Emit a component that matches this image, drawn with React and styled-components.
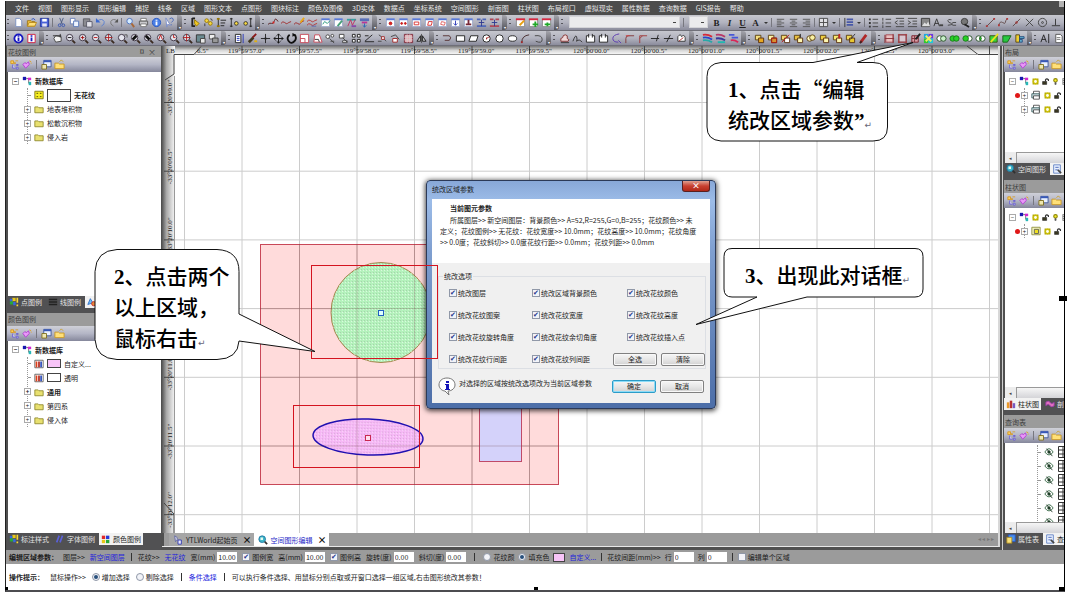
import React from "react";
import styled, { createGlobalStyle } from "styled-components";

const GlobalStyle = createGlobalStyle`
  * {
    box-sizing: border-box;
  }
  body {
    margin: 0;
    background: #fff;
    color: #1c1c1c;
    font-family: "Noto Sans CJK SC", "Noto Sans", sans-serif;
    font-size: 7px;
    line-height: 10px;
    overflow: hidden;
  }
  button, input, select {
    font: inherit;
    color: inherit;
    margin: 0;
  }
`;

/* ---------- icons ---------- */

const p = (d, stroke = "#333", fill = "none", w = 1) => ({ d, stroke, fill, w });

const ring = (x, y, r) =>
  `M${x - r} ${y}a${r} ${r} 0 1 0 ${2 * r} 0a${r} ${r} 0 1 0 ${-2 * r} 0z`;

const lens = (...extra) => [
  p(ring(5, 5, 3.5), "#3a3040", "#e6e6ee"),
  p("M8 8l3 3", "#3a2a20", "none", 2),
  ...extra,
];

const tableTop = (...extra) => [
  p("M1.5 2.5h9v8h-9z", "#9aa6c8", "#fff"),
  p("M1.5 2.5h9", "#5a7ad8", "none", 2),
  ...extra,
];

const redTop = (...extra) => [
  p("M1.5 2.5h9v8h-9z", "#888", "#fff"),
  p("M1 2.5h10", "#d82840", "none", 2),
  ...extra,
];

const overlap = (a, b, ...extra) => [
  p("M1.5 2.5h6v5h-6z", "#5a4010", a),
  p("M5 5.5h5.5v5H5z", "#5a3010", b),
  ...extra,
];

const GLYPHS = {
  newDoc: [p("M3 1.5h4l2.5 2.5v6.5H3z", "#7a8fc0", "#fff")],
  open: [p("M1.5 4h4l1 1h3v5h-8z", "#a07818", "#f0c040"), p("M1.5 10l2-4h8l-2 4z", "#b88a20", "#ffe078"), p("M6 2.5q3-2 4 1", "#2a50c0")],
  save: [p("M1.5 1.5h9v9h-9z", "#22339a", "#4a62d8"), p("M3.5 2h5v3h-5z", "none", "#fff"), p("M3.5 7h5v3.5h-5z", "none", "#e6e6f4")],
  cut: [p("M4 1l3 7M8 1L5 8", "#4a5a80"), p(ring(4, 9, 1.5), "#3a58b0"), p(ring(8, 9, 1.5), "#3a58b0")],
  copy: [p("M1.5 1.5h5v6h-5z", "#6a80b8", "#fff"), p("M5 4.5h5.5v6H5z", "#5a78b8", "#eef4ff")],
  paste: [p("M1.5 2h7v8h-7z", "#5a5a60", "#8a8a90"), p("M5 5h6v6H5z", "#5a5a68", "#e4e4ec")],
  undo: [p("M3 4q5-3 7 1q1 3-3 5", "#5a80d0", "none", 1), p("M1 1v5h5z", "none", "#3a68d0")],
  redo: [p("M10 4q-5-3-7 1q-1 3 3 5", "#777", "none", 1), p("M11 2v4H7z", "none", "#555")],
  find: [p(ring(5, 4.5, 3), "#4a70c0", "#d4ecff"), p("M7 7l3 4", "#a86838", "none", 2)],
  print: [p("M3 1.5h6v3H3z", "#777", "#fff"), p("M1.5 4.5h9v4h-9z", "#555", "#c8c8cc"), p("M3 7.5h6v3H3z", "#777", "#fff")],
  info: [p(ring(6, 6, 4.5), "#2858c0", "#4a80e8"), p("M6 5v4M6 3v1", "#fff", "none", 2)],
  help: [p("M2 1l5 8-3-1-1 3z", "#7a8cc8", "#fff"), p("M6 2q3-2 4 0t-2 4M8 8v1", "#4868b8", "none", 1)],
  snapA: [p("M2.5 1v9.500M2.500 1.500h3M2.500 10h3", "#222", "none", 2), p("M5 3l5 4-3 3-2-3z", "#987808", "#f0c820")],
  snapB: [p(ring(4, 4, 2), "#987808", "#f8d840"), p(ring(8, 7, 2), "#987808", "#f8d840"), p("M8 2q2 0 2 2M2 7v3", "#333")],
  snapC: [p("M2.5 1v10M5 3.500h6M5 6.500h5M5 9.500h4", "#222", "none", 1), p("M1 2h3M1 10h3", "#987808", "none", 2)],
  snapD: [p("M2.5 1v10M1 2h3M1 10h3", "#222"), p(ring(8, 7, 2), "#333", "#f8d840")],
  snapE: [p("M9.500 1v10M8 2h3M8 10h3", "#222"), p(ring(4, 7, 2), "#333", "#f8d840")],
  waveA: [p("M0 8q2-2 4-1t3-3 4 1", "#5a2020"), p("M5 5h2v2H5z", "none", "#e02020")],
  waveB: [p("M0 7q2-3 4-1t3 1 4-2", "#a02828", "none", 1)],
  waveC: [p("M0 8q2-3 4-1t3 0 4-3", "#a02828"), p("M7 6l4-5", "#e8a818", "none", 2)],
  waveD: [p("M0 5q2-3 4-1t3 1 4-2M0 9q2-3 4-1t3 1 4-2", "#b83838"), p("M5 10h5", "#5a68b0", "none", 1)],
  waveE: tableTop(p("M3 8l2-3 3 2 3-3", "#2a9880")),
  waveF: tableTop(p("M5 10l5-6", "#48a078", "none", 2)),
  waveG: [p("M1 3h10", "#38a0a0", "none", 2), p("M2 10l3-7 2 6 3-6", "#c03060"), p("M6 10h5", "#8848a8", "none", 2)],
  waveH: [p("M1 3h10", "#5870b8", "none", 3), p("M3 6h6", "#b83898", "none", 2), p("M6 7v4M4 9l2 2 2-2", "#2868b8")],
  ptA: tableTop(p(ring(6, 7, 1.5), "#c01818", "#e02020")),
  ptB: tableTop(p(ring(4, 7, 1), "#c01818", "#e02020"), p(ring(8, 7, 1), "#c01818", "#e02020")),
  ptC: tableTop(p("M3.500 5.500h5v3h-5z", "#d83030")),
  ptD: tableTop(p("M4 9l1-4h4l-1 4z", "#d83030")),
  ptE: tableTop(p("M4 8l1-3 4 1-1 3z", "#e06060")),
  ptF: tableTop(p("M6 4v5M4 7l2 2 2-2", "#2a38b8")),
  ptG: tableTop(p("M6 3v4M3 8h6", "#782838", "none", 2)),
  ptH: [p("M1 2.500h4M7 2.500h4M1 10h10", "#5068b8", "none", 2), p("M6 3v7M3 6h6", "#303a90")],
  ptI: [p("M1 2.500h4M7 2.500h4M1 10h10", "#b04858", "none", 2), p("M6 3v7M3 6h6", "#303a90")],
  calA: redTop(p("M5 9l5-5", "#e8a010", "none", 2)),
  calB: redTop(p("M5 8h6M8 5v6", "#20a828", "none", 2)),
  calC: redTop(p("M4 8h6M7 6v4", "#20a828", "none", 2)),
  alignL: [p("M2 2.500h8M2 4.500h5M2 6.500h8M2 8.500h5M2 10.500h8", "#555")],
  alignC: [p("M2 2.500h8M4 4.500h4M2 6.500h8M4 8.500h4M2 10.500h8", "#555")],
  alignR: [p("M2 2.500h8M5 4.500h5M2 6.500h8M5 8.500h5M2 10.500h8", "#555")],
  grid: [p("M1.500 1.500h9v9h-9zM6 1.500v9M1.500 6h9", "#4a4a4a", "#e0e0e4")],
  spacing: [p("M4 2.500h7M4 5.500h7M4 8.500h7", "#4858a8", "none", 2), p("M2 1v10", "#333")],
  listA: [p("M5 2.500h6M5 6.500h6M5 10.500h6", "#444"), p("M1 2.500h2M1 6.500h2M1 10.500h2", "#333", "none", 2)],
  listB: [p("M5 2.500h6M5 6.500h6M5 10.500h6M2 1v3M2 5v3M2 9v3", "#444")],
  indentA: [p("M2 1.500h9M6 4.500h5M6 7.500h5M2 10.500h9M4 4L1 6l3 2", "#444")],
  indentB: [p("M1 1.500h10M6 4.500h5M6 7.500h5M1 10.500h10M1 4l3 2-3 2", "#444")],
  picture: [p("M1.500 1.500h9v9h-9z", "#3a3a3a", "#888"), p("M2 10l3-4 2 2 2-3 2 5z", "none", "#ddd")],
  fontA: [p("M1 10L4 2l3 8M2 7h4", "#333"), p("M7 9h4", "#444", "none", 2)],
  fontS: [p("M6 3q-4-1-4 1t4 3-4 2M7 6h4M7 9h4", "#444")],
  globe: [p(ring(6, 5, 3.500), "#3a3a3a", "#777"), p("M6 8l5 3", "#222", "none", 2)],
  line: [p("M2 10l8-8", "#604848"), p("M1 9h2v2H1zM9 1h2v2H9z", "none", "#b03838")],
  poly: [p("M1 9q1-5 4-3t3 0 2-4", "#604848"), p("M0 8h2v2H0zM9 1h2v2H9z", "none", "#b03838")],
  slash: [p("M2 10l8-8", "#604848"), p(ring(6, 6, 1), "#b03838")],
  cross: [p("M2 2l8 8M10 2l-8 8", "#444")],
  target: [p(ring(6, 6, 4.500), "#444"), p(ring(6, 6, 1), "#444")],
  perp: [p("M6 2v7M2 9.500h9", "#333", "none", 1)],
  infoRing: [p(ring(6, 6, 4.500), "#1818c0", "#fff", 2), p("M6 5v4M6 2.500v1.500", "#1818c0", "none", 2)],
  infoBox: [p("M2 1.500h8v9H2z", "#d02040", "#fff", 1), p("M6 5v4M6 2.500v1.500", "#1818c0", "none", 2)],
  hand: [p("M2 6l2-3 6 1v5l-6 1z", "#444", "#f4f4f4"), p("M1 3h9M9 1v4", "#333")],
  lensMinus: lens(p("M3 5h4", "#111")),
  lensPlus: lens(p("M3 5h4M5 3v4", "#a01010")),
  lensRed: lens(p("M3 5h4", "#c01010")),
  lensGrid: lens(p("M1 5h8M5 1v8", "#b01818")),
  lensPair: [...lens(), p("M8 2h3v3", "#555")],
  lensDark: lens(p("M3 7l4-4", "#111", "none", 3)),
  lensBlack: lens(p("M3 3l4 4", "#111", "none", 3)),
  lensArc: lens(p("M3 7l2-5 2 5", "#c01818")),
  lensDot: lens(p("M5 2v3h2", "#c01818")),
  screen: [p("M1.500 2h9v8h-9z", "#333", "#6a8a90"), p("M6 6h5v5H6z", "#444", "#e8e8e8")],
  windows: [p("M1.500 1.500h6v5h-6z", "#444", "#eee"), p("M5 5.500h6v5H5z", "#444", "#999")],
  pageSel: [p("M1.500 1.500h6v9h-6z", "#222", "#fff"), p("M3 4h3M3 6h3M3 8h3", "#2838b8"), p("M10 1v10", "#2838b8")],
  brush: [p("M2 10l5-5", "#403820", "none", 3), p("M6 5l4-4", "#8a1818", "none", 2), p("M8 9h3", "#e0b010", "none", 2)],
  plus: [p("M6 1v10M1 6h10", "#222"), p("M5 5h2v2H5z", "none", "#222")],
  move: [p("M6 1v10M1 6h10M4 3l2-2 2 2M4 9l2 2 2-2M3 4L1 6l2 2M9 4l2 2-2 2", "#111")],
  rotate: [p("M4 2q-4 3-1 7t7-1q2-4-1-6", "#111", "none", 2), p("M7 0l4 2-4 2z", "none", "#111")],
  scale: [p("M1.500 1.500h9v9h-9z", "#c84858", "#fff"), p("M1.500 6h5v4.500", "#c84858")],
  shear: [p("M2 10l1-8h5l3 8z", "#c84858", "#fff"), p("M3 7h4l1 3", "#333")],
  dup: [p(ring(3, 4, 2), "#444", "#fff"), p(ring(8, 3, 1.500), "#444", "#fff"), p("M5 6l5 5M6 9h4", "#444")],
  dupB: [p("M1.500 1.500h5v4h-5z", "#444", "#fff"), p("M5 5l5 5M5 8.500h5v2H5z", "#444", "#fff")],
  array: [p("M1.500 1.500h3v3h-3zM7 1.500h3v3H7zM1.500 7h3v3h-3zM7 7h3v3H7z", "#222", "#fff")],
  trim: [p("M1 9L9 2M1 3h4M1 9.500h10", "#222")],
  nodeA: [p("M2 2l4 3 4 4M1 9h4", "#444"), p("M5 4h3v3H5z", "#a02828", "#fff")],
  nodeB: [p("M1 4l5-2 4 5", "#444"), p("M3 6h5v4H3z", "#a02828", "#fff")],
  redBox: [p("M1.500 1.500h9v9h-9z", "#7a2838", "#e8a8b0"), p("M1.500 4.500h9M1.500 7.500h9M4.500 1.500v9M7.500 1.500v9", "#d8d0d0")],
  mirror: [p("M6 1v10", "#555"), p("M5 3v6H1zM7 3v6h4z", "#222", "#bbb")],
  hook: [p("M1 3h7q3 2 0 5H3", "#553030")],
  rect: [p("M1.500 3h9v6h-9z", "#222", "#fff")],
  para: [p("M3 3h8L9 9H1z", "#222", "#fff")],
  circleR: [p(ring(6, 6, 4), "#222", "#fff"), p("M6 6l3-2M6 5v2", "#a01818")],
  circle: [p(ring(6, 6, 4), "#222", "#fff")],
  ellipse: [p("M1.500 6a4.500 3 0 1 0 9 0a4.500 3 0 1 0-9 0z", "#222", "#fff")],
  arc: [p("M2 10q0-7 8-8", "#442828"), p("M1 9h2v2H1z", "none", "#a02828")],
  arcB: [p("M2 3q8-1 8 4t-7 2", "#444")],
  hill: [p("M2 9q-1-4 2-4 0-3 3-3t2 4q3 1 1 3z", "#803030", "#f0d8d8"), p("M2 10.500h9", "#333")],
  curve: [p("M1 9q3-8 4-5t0 5q3-3 6 1", "#333")],
  cutBox: [p("M4 3H1.500v7h9V3H8M4 1v4M8 1v4", "#222", "#fff")],
  dashArc: [p("M9 1Q2 2 2 6t6 4M8 8l3 3", "#5a38b0")],
  fillet: [p("M2 11V6q0-3 3-3h6", "#803838"), p("M2 3h4", "#d03838")],
  filletB: [p("M3 11V3h8M3 6l3-3", "#a03838")],
  joint: [p("M1 6h9M7 9l2-7", "#222")],
  jointB: [p("M1 6h10M4 10l4-8", "#222")],
  blob: [p("M2 9V4q3-4 4 0 3-3 4 1v4z", "#333", "#fff"), p("M3 9l5-4", "#b03030")],
  layers: [p("M1 2q5-1 10 2", "#d82838", "none", 2), p("M1 5q5-1 10 2", "#2848c8", "none", 2), p("M1 8q5-1 10 2", "#28a8a8", "none", 2)],
  layersB: [p("M1 2q5-1 10 2", "#b83868", "none", 2), p("M1 6q5-1 10 2", "#38389a", "none", 2), p("M3 10h8", "#20b8b0", "none", 2)],
  layersC: [p("M1 2h6M4 5h7", "#4858d8", "none", 2), p("M3 8q4-1 8 2", "#d82858", "none", 2)],
  ovA: overlap("#f4e080", "#e8a820"),
  ovB: overlap("#fff4a8", "#d89030", p("M5 5.500h5.500v5H5z", "#b02010", "none", 1)),
  ovC: overlap("#f4d870", "#fff", p("M2 10l8-8", "#c02020", "none", 1)),
  ovD: overlap("#e8c040", "#fff8b0", p("M8 1v4", "#222")),
  ovE: [p(ring(4, 6, 3), "#5a4010", "#fff8c0"), p(ring(7, 5, 3), "#5a4010", "#f8f0a0")],
  ovF: overlap("#f0d040", "#fff8b0"),
  ovG: overlap("#f8e870", "#fff8b0", p("M8 1v5", "#c02828", "none", 2)),
  ovH: overlap("#f0d858", "#e8c830", p("M6 7l5-6", "#333", "none", 1)),
  marker: [p("M3 10l6-8", "#b02828", "none", 3), p("M2 11l2-2", "#402020", "none", 2)],
  areaA: [p("M2 2h8v8H2z", "#a84850", "#e8c0c0"), p("M1 6h10M1 2v9M10 1v10", "#8a3038")],
  areaB: [p("M2 2h8v8H2z", "#6a4050", "#d8c8d0"), p("M1 2h10M1 10h10M2 1v10M10 1v10", "#a83838")],
  areaC: [p("M2 3h7v7H2z", "#7a2028", "#d8a0a8"), p("M2 6h7M5 3v7", "#7a3038"), p("M6 7l5-6", "#222", "none", 2)],
  areaD: [p("M1 1h5v5H1z", "none", "#20a8e0"), p("M6 1h5v5H6z", "none", "#7038e0"), p("M1 6h5v5H1z", "none", "#30c830"), p("M6 6h5v5H6z", "none", "#20c8d8"), p("M3 3l6 6M9 3L3 9", "#f4f060", "none", 2)],
  vennA: [p(ring(4, 6, 3), "#285028", "#fff"), p(ring(8, 6, 3), "#285028", "#c8f0c8")],
  vennB: [p(ring(4, 6, 3), "#187818", "#28d028"), p(ring(8, 6, 3), "#187818", "#28d028")],
  vennC: [p(ring(8, 6, 3), "#285028", "#fff"), p(ring(4, 6, 3), "#187818", "#28d028")],
  vennD: [p(ring(4, 6, 3), "#285028", "#fff"), p(ring(8, 6, 3), "#285028", "#fff"), p("M6 4q2 2 0 4q-2-2 0-4z", "#187818", "#28d028")],
  greenA: [p("M2 3h8v7H2z", "#385010", "#38d838"), p("M3 10l8-9", "#e8e020", "none", 2)],
  greenB: [p("M2 3h9l-4 7H2z", "#186018", "#28c840")],
  greenC: [p("M2 2h4v8H2z", "#5a4818", "#f0d030"), p("M6 4h5v2H6zM6 7h3v3H6z", "#285080", "#60b0d0")],
  textA: [p("M1 10L4 2l3 8M2 7h4M9.500 1v10", "#222", "none", 1)],
  sheet: [p("M3 1.500h5l2 2v7H3z", "#555", "#fff"), p("M4 5h4M4 7h4", "#777")],
  newTree: [p("M2 2h3v3H2zM6 4h1v1H6z", "#d89820", "#f8d060"), p("M4 6v4h3M8 9h2v2H8zM8 6h2v1H8z", "#6a60d0", "#d8d0f8"), p("M7 2h3", "#d0a038")],
  heart: [p("M1 6l2-2 2 1 2-2 1 3-4 4z", "#b040d0", "#e898f8"), p("M8 2l2 1M10 4v1", "#e0a020", "none", 1)],
  props: [p("M3 1.500h8v7H3z", "#405898", "#e8f0ff"), p("M3 2.500h8", "#3858b8", "none", 2), p("M1 6h5v5H1z", "#807020", "#f0e8b0")],
  folderUp: [p("M1 4.500h4l1 1h5v5H1z", "#c89828", "#ffe078"), p("M6 3l2-2 2 2", "#c8a028")],
  folder: [p("M1 3.500h4l1 1h5v6H1z", "#8a8428", "#e8e070")],
  database: [p("M1 1h4v4H1z", "none", "#1818b0"), p("M5 3h3v6M8 8h1", "#666"), p("M7 2h4v3H7z", "none", "#d028d0"), p("M8 7h3v4H8z", "none", "#28b8b8")],
  pattern: [p("M1 1.500h10v9H1z", "#787010", "#f8f020"), p("M3 4h2M7 4h2M3 8h2M7 8h2", "#403800", "none", 1)],
  books: [p("M1 1.500h10v9H1z", "#555", "#fff"), p("M3 3v7", "#e04018", "none", 2), p("M6 3v7", "#b02018", "none", 2), p("M8.500 3v7", "#2848b8", "none", 2)],
  sun: [p(ring(6, 6, 4), "#c8bc08", "#fffff0", 3), p("M1 1h2v2H1zM9 1h2v2H9zM1 9h2v2H1zM9 9h2v2H9z", "none", "#a89c08")],
  lock: [p("M1 6h7v5H1z", "#222", "#3a3820"), p("M6 6V3q2-3 5 0v2", "#333", "none", 2)],
  bulb: [p(ring(6, 4, 3), "#908808", "#f8f030", 2), p("M5 8h2v3H5z", "#444", "#777")],
  stack: [p("M3 1.500h7v8H3z", "#444", "#fff"), p("M1 4.500h9v5H1z", "#355a5a", "#c8dce0"), p("M3 7h7v4H3z", "#444", "#fff")],
  chartDoc: [p("M1 1.500h10v9H1z", "#888838", "#f4f4b8"), p("M4 4h5v5H4z", "#555", "#f0e020")],
  eye: [p("M1 6q5-8 10 0q-5 7-10 0z", "#245a34", "#fff"), p(ring(6, 6, 1.500), "#1a3a22", "#285a3a"), p("M3 2l7 9", "#1a3020")],
  cells: [p("M1.500 .5h9v11h-9zM6 .5v11M1.500 4h9M1.500 8h9", "#333", "#fff")],
  dots: [p("M1 2h4v4H1z", "none", "#e02828"), p("M6 2h4v4H6z", "none", "#2838d8"), p("M1 7h4v4H1z", "none", "#e8c818"), p("M6 7h4v4H6z", "none", "#28a838")],
  warn: [p("M1 5h4v4H1z", "none", "#28a838"), p("M4 1h4v4H4z", "none", "#e8c818"), p("M10 1v6M10 9v2", "#f8d830", "none", 2), p("M1 2h3v3H1zM5 6h3v4H5z", "none", "#3868e0")],
  bars: [p("M1 3h10M1 6h10M1 9h10", "#222", "none", 2)],
  slant: [p("M2 10l3-8M6 10l3-8", "#5a60d8", "none", 2)],
  globeC: [p(ring(5, 5, 4), "#1a70a0", "#40b8c8"), p("M3 3h3v3H3z", "none", "#e8f8f0"), p("M8 8l3 3", "#303030", "none", 2)],
  doc: [p("M2 1l3 2v3l-2 2z", "#5a60a0", "#e0e0f4"), p("M6 6h4v5H6z", "#2830b0", "#e8e8ff")],
  palette: [p("M1 9L4 2l3 5z", "#2868c8", "#70c0f0"), p(ring(8, 8, 2.500), "#c02828", "#e88838")],
  columns: [p("M1 4h3v7H1z", "none", "#e89828"), p("M4.500 2h3v9h-3z", "none", "#b83030"), p("M8 5h3v6H8z", "none", "#7858c0")],
  section: [p("M1 4q3-3 5 0t5 0v4q-3 3-5 0t-5 0z", "#9838a8", "#e070c0")],
  propsTab: [p("M3 1h8v8H3z", "#2858c8", "#4890f0"), p("M1 4h6v7H1z", "#a88820", "#f8e078")],
  query: [p("M2 1h8v10H2z", "#5878c0", "#e8f0ff"), p("M4 4h4M4 7h3", "#3858b0"), p("M7 7l4 4", "#444", "none", 2)],
};

const Svg = styled.svg`
  display: block;
  flex: none;
  width: ${(props) => props.$size || 10}px;
  height: ${(props) => props.$size || 10}px;
`;

const Icon = ({ name, size }) => (
  <Svg $size={size} viewBox="0 0 12 12" aria-hidden="true">
    {GLYPHS[name].map((g, i) => (
      <path key={i} d={g.d} stroke={g.stroke} fill={g.fill} strokeWidth={g.w} />
    ))}
  </Svg>
);

/* ---------- shell ---------- */

const Page = styled.div`
  position: relative;
  height: 100vh;
  padding: 1px 2px 6px 5px;
  overflow: hidden;
`;

const AppWindow = styled.div`
  display: flex;
  flex-direction: column;
  height: 100%;
  background: #505050;
  border-left: 1px solid #222;
  border-right: 1px solid #000;
  border-bottom: 2px solid #4c4c50;
`;

const MenuBar = styled.nav`
  display: flex;
  flex: none;
  gap: 9px;
  height: 14px;
  padding-left: 9px;
  background: #4d4d4d;
  overflow: hidden;
`;

const MenuItem = styled.button`
  flex: none;
  padding: 0;
  border: 0;
  background: none;
  color: #e8e8e8;
  white-space: nowrap;
  line-height: 12px;
`;

const ToolRow = styled.div`
  display: flex;
  flex: none;
  align-items: stretch;
  height: ${(props) => props.$height}px;
  background: linear-gradient(#c6c7ce, #b2b3bf 50%, #8b8c9c);
  border-bottom: 1px solid #6f6f78;
  overflow: hidden;
`;

const Grip = styled.span`
  flex: none;
  width: 6px;
  margin: 3px 0;
  background: radial-gradient(circle, #55555c 1px, transparent 1px) 0 0 / 4px 3px no-repeat,
    radial-gradient(circle, #55555c 1px, transparent 1px) 0 4px / 4px 3px no-repeat,
    radial-gradient(circle, #55555c 1px, transparent 1px) 0 8px / 4px 3px no-repeat;
`;

const Overflow = styled.button`
  display: flex;
  align-items: flex-end;
  justify-content: center;
  flex: none;
  width: 5px;
  margin: 0 1px;
  padding: 0;
  border: 0;
  border-radius: 0 3px 3px 0;
  background: linear-gradient(#a4a4ac, #55555c);
  color: #fff;
  font-size: 4px;
  line-height: 6px;
`;

const ToolButton = styled.button`
  display: flex;
  align-items: center;
  justify-content: center;
  flex: none;
  width: 13px;
  padding: 0;
  border: 0;
  background: none;
`;

const LetterButton = styled(ToolButton)`
  color: #222;
  font-family: "Liberation Serif", serif;
  font-size: 9px;
  font-weight: bold;
  font-style: ${(props) => (props.$italic ? "italic" : "normal")};
  text-decoration: ${(props) => (props.$underline ? "underline" : "none")};
`;

const Caret = styled.span`
  flex: none;
  align-self: center;
  margin: 0 2px;
  border: 2px solid transparent;
  border-top-color: #333;
  border-bottom: 0;
`;

const Divider = styled.span`
  flex: none;
  width: 1px;
  margin: 3px 2px 3px 1px;
  background: #77777f;
`;

const ToolSelect = styled.select`
  flex: none;
  width: ${(props) => props.$width}px;
  height: 12px;
  margin: 1px 2px 0 3px;
  border: 1px solid #d4d4d8;
  border-radius: 0;
  appearance: none;
  background: linear-gradient(#444, #444) right 3px center / 3px 1px no-repeat, #ebebed;
`;

const Tools = ({ items }) =>
  items.split(" ").map((name, i) => {
    if (name === "|") return <Divider key={i} />;
    if (name === "v") return <Caret key={i} />;
    return (
      <ToolButton key={i} aria-label={name}>
        <Icon name={name} size={11} />
      </ToolButton>
    );
  });

const ToolGroup = ({ items }) => (
  <>
    <Grip />
    <Tools items={items} />
    <Overflow aria-label="more">▾</Overflow>
  </>
);

const Workspace = styled.main`
  display: flex;
  flex: 1;
  min-height: 0;
`;

/* ---------- side panels ---------- */

const SideBar = styled.aside`
  display: flex;
  flex-direction: column;
  flex: none;
  width: ${(props) => props.$width}px;
  min-height: 0;
  padding: 0 ${(props) => (props.$right ? 0 : 1)}px 0 1px;
  border-left: ${(props) => (props.$right ? "1px solid #d0d0d0" : "0")};
  overflow: hidden;
`;

const Panel = styled.section`
  display: flex;
  flex-direction: column;
  flex: ${(props) => props.$grow} 1 0;
  min-height: 0;
`;

const PanelTitle = styled.header`
  display: flex;
  flex: none;
  align-items: center;
  height: ${(props) => (props.$tall ? 13 : 11)}px;
  padding: 0 4px 0 1px;
  background: #9b9b9b;
  color: #3e3e3e;
  span {
    flex: 1;
    white-space: nowrap;
  }
`;

const TitleButton = styled.button`
  width: 10px;
  padding: 0;
  border: 0;
  background: none;
  font-size: 8px;
  line-height: 8px;
`;

const PanelTools = styled.div`
  display: flex;
  flex: none;
  height: 15px;
  padding-left: 1px;
  background: linear-gradient(#cfd0d8, #b4b6c6 50%, #85879b);
  ${Divider} {
    margin: 3px 3px 3px 2px;
  }
`;

const Tree = styled.div`
  flex: 1;
  min-height: 0;
  padding: 2px 0 0 4px;
  margin-left: 1px;
  background: #fff;
  overflow: hidden;
`;

const Branch = styled.div`
  margin-left: ${(props) => props.$indent || 15}px;
  border-left: 1px dotted #999;
`;

const Row = styled.div`
  display: flex;
  align-items: center;
  gap: 3px;
  height: 14px;
  font-weight: ${(props) => (props.$bold ? "bold" : "normal")};
  white-space: nowrap;
  ${Branch} > & {
    margin-left: -4px;
  }
`;

const Toggle = styled.button`
  flex: none;
  width: 7px;
  height: 7px;
  padding: 0;
  border: 1px solid #aaa;
  background: #fff;
  color: #222;
  font-size: 6px;
  line-height: 5px;
`;

const Lead = styled.span`
  flex: none;
  width: 7px;
  height: 1px;
  background: linear-gradient(90deg, transparent 4px, #999 4px);
`;

const Dot = styled.span`
  flex: none;
  width: 5px;
  height: 5px;
  margin: 0 -2px 0 -6px;
  border-radius: 50%;
  background: #e01818;
`;

const Swatch = styled.span`
  flex: none;
  width: ${(props) => props.$width}px;
  height: ${(props) => props.$height}px;
  border: 1px solid #444;
  background: ${(props) => props.$color};
`;

const ScrollTrack = styled.div`
  display: flex;
  flex: none;
  align-items: center;
  height: 11px;
  margin-left: 1px;
  background: #ececec;
  color: #444;
  font-size: 5px;
  &::before {
    content: "◂";
    width: 11px;
    text-align: center;
  }
  &::after {
    content: "";
    flex: 1;
    height: 10px;
    border: 1px solid #999;
    border-right: 0;
    background: linear-gradient(#f6f6f6, #d4d4d8);
  }
`;

const TabStrip = styled.div`
  display: flex;
  flex: none;
  align-items: flex-start;
  gap: 2px;
  height: 17px;
  background: #515153;
  overflow: hidden;
`;

const PanelTab = styled.button`
  display: flex;
  flex: none;
  align-items: center;
  gap: 2px;
  height: 12px;
  padding: 0 2px;
  border: 0;
  background: ${(props) => (props.$active ? "#f2f2f2" : "transparent")};
  color: ${(props) => (props.$active ? "#222" : "#e4e4e4")};
  white-space: nowrap;
`;

const PanelHead = ({ title, closable, tall }) => (
  <>
    <PanelTitle $tall={tall}>
      <span>{title}</span>
      {closable && <TitleButton aria-label="pin">¤</TitleButton>}
      {closable && <TitleButton aria-label="close">×</TitleButton>}
    </PanelTitle>
    <PanelTools>
      <Tools items="newTree heart | props folderUp" />
    </PanelTools>
  </>
);

const FolderRow = ({ label, bold }) => (
  <Row $bold={bold}>
    <Toggle>+</Toggle>
    <Icon name="folder" />
    {label}
  </Row>
);

const LayerStates = () => (
  <>
    <Icon name="sun" size={7} />
    <Icon name="lock" size={7} />
    <Icon name="bulb" size={7} />
    <Icon name="cells" size={7} />
  </>
);

const LayerRow = ({ icon, active }) => (
  <Row>
    {active && <Dot />}
    <Toggle>+</Toggle>
    <Icon name={icon} />
    <LayerStates />
  </Row>
);

const LayerRoot = () => (
  <Row>
    <Toggle>−</Toggle>
    <Icon name="database" />
    <LayerStates />
  </Row>
);

/* ---------- drawing area ---------- */

const Center = styled.div`
  display: flex;
  flex-direction: column;
  flex: 1;
  min-width: 0;
  margin: 0 2px 3px 0;
  border-right: 2px solid #d8d8d8;
  border-bottom: 1px solid #e8e8e8;
`;

const MapSvg = styled.svg`
  display: block;
  flex: 1;
  width: 100%;
  min-height: 0;
  background: #fff;
  text {
    font-family: "Liberation Serif", serif;
    font-size: 7px;
    fill: #222;
  }
`;

const COLS = [
  "", "119°59'57.0\"", "119°59'57.5\"", "119°59'58.0\"", "119°59'58.5\"",
  "119°59'59.0\"", "119°59'59.5\"", "120°00'00.0\"", "120°00'00.5\"",
  "120°00'01.0\"", "120°00'01.5\"", "120°00'02.0\"", "120°00'02.5\"",
  "120°00'03.0\"", "",
];
const ROWS = ["09.0", "09.5", "10.0", "10.5", "11.0", "11.5", "12.0"];

const MapView = () => (
  <MapSvg>
    <defs>
      <linearGradient id="rulerTop" x1="0" y1="0" x2="0" y2="1">
        <stop offset="0" stopColor="#777" />
        <stop offset=".5" stopColor="#d8d8d8" />
        <stop offset="1" stopColor="#fff" />
      </linearGradient>
      <linearGradient id="rulerLeft">
        <stop offset="0" stopColor="#555" />
        <stop offset=".35" stopColor="#aaa" />
        <stop offset="1" stopColor="#f8f8f8" />
      </linearGradient>
      <pattern id="hatch" width="3" height="3" patternUnits="userSpaceOnUse">
        <path d="M0 0h1v1H0z" fill="#fff" fillOpacity=".5" />
        <path d="M1 2h1v1H1z" fill="#787878" fillOpacity=".25" />
      </pattern>
    </defs>
    {/* shapes are in window coordinates */}
    <g transform="translate(-162 -46)">
      <rect x="162" y="46" width="100%" height="9" fill="url(#rulerTop)" />
      <rect x="162" y="46" width="13" height="100%" fill="url(#rulerLeft)" />
      {COLS.map((label, i) => {
        const x = 184.5 + i * 57.5;
        return (
          <g key={i}>
            <path d={`M${x} 55V540`} stroke="#ccc" />
            <path d={`M${x} ${i ? 46 : 55}V55`} stroke="#444" />
            <text x={x - 14} y="53">{label}</text>
          </g>
        );
      })}
      <text x="166" y="53">LB</text>
      <text x="197" y="53">6.5"</text>
      {ROWS.map((label, i) => {
        const y = 102.5 + i * 68.7;
        return (
          <g key={label}>
            <path d={`M175 ${y}H998`} stroke="#ccc" />
            <path d={`M164 ${y}h11`} stroke="#444" />
            <text transform={`translate(172 ${y + 13}) rotate(-90)`}>{`-33°20'${label}"`}</text>
          </g>
        );
      })}
      <path d="M165 80l9-6V54.500h20l7-8M967 46l11 8.500h20M164 503l10 11v22" stroke="#444" fill="none" />
      <path d="M174.500 76V540M194 54.500H978" stroke="#999" />

      <rect x="260.500" y="244.500" width="298" height="240" fill="#ff0000" fillOpacity=".14" stroke="#c84858" />
      <rect x="479.500" y="360.500" width="42" height="101" fill="#d4d2fa" stroke="#c04a68" />
      <circle cx="381" cy="312.500" r="50" fill="#b4f2bc" stroke="#a8834c" />
      <circle cx="381" cy="312.500" r="50" fill="url(#hatch)" />
      <g transform="rotate(2 368 437)">
        <ellipse cx="368" cy="437" rx="55" ry="18" fill="#f6b8f6" stroke="#2010b0" strokeWidth="1.500" />
        <ellipse cx="368" cy="437" rx="54" ry="17" fill="url(#hatch)" />
      </g>
      <path d="M260 308.600H559M260 377.300H559M260 446H559M299.500 244v241M357 244v241M414.500 244v241M472 244v241M529.500 244v241" stroke="#603030" strokeOpacity=".25" />
      <rect x="378.500" y="310.500" width="5" height="5" fill="#dff" stroke="#2060c0" />
      <rect x="365.500" y="435.500" width="5" height="5" fill="#fde" stroke="#c82850" />
      <rect x="293.500" y="405.500" width="126" height="62" fill="none" stroke="#d41420" />
    </g>
  </MapSvg>
);

const DocTabs = styled.div`
  display: flex;
  flex: none;
  height: 13px;
  margin-left: 2px;
  padding-left: 5px;
  background: #9b9b9b;
`;

const DocTab = styled.button`
  display: flex;
  align-items: center;
  gap: 3px;
  padding: 0 4px;
  border: 0;
  background: ${(props) => (props.$active ? "#fff" : "#a6a6a6")};
  color: ${(props) => (props.$active ? "#2828c8" : "#222")};
  white-space: nowrap;
  b {
    width: 7px;
    margin-left: 2px;
    color: #111;
    font-size: 9px;
    text-align: center;
  }
`;

const DocNav = styled.span`
  flex: 1;
  padding-right: 4px;
  color: #777;
  font-size: 6px;
  line-height: 12px;
  text-align: right;
`;

/* ---------- bottom bars ---------- */

const ParamBar = styled.form`
  display: flex;
  flex: none;
  align-items: center;
  gap: ${(props) => (props.$plain ? 6 : 5)}px;
  height: ${(props) => (props.$plain ? 26 : 14)}px;
  padding-left: 3px;
  background: ${(props) => (props.$plain ? "#fff" : "#9b9b9b")};
  white-space: nowrap;
  overflow: hidden;
`;

const Cluster = styled.div`
  display: flex;
  flex: none;
  align-items: center;
  gap: 4px;
`;

const Rule = styled.span`
  flex: none;
  width: 1px;
  height: 8px;
  margin: 0 ${(props) => (props.$wide ? 3 : 1)}px;
  background: #333;
`;

const Link = styled.a`
  color: #2222dc;
  text-decoration: none;
`;

const Field = styled.label`
  display: flex;
  flex: none;
  align-items: center;
  gap: ${(props) => props.$gap || 2}px;
`;

const NumberInput = styled.input`
  width: 20px;
  height: 10px;
  padding: 0 1px;
  border: 0;
  background: #fff;
`;

const Check = styled.input`
  display: grid;
  flex: none;
  place-items: center;
  width: 8px;
  height: 8px;
  border: 1px solid #9098a8;
  border-radius: ${(props) => (props.type === "radio" ? "50%" : "0")};
  appearance: none;
  background: #f2f3f8;
  &:checked::before {
    content: "${(props) => (props.type === "radio" ? "" : "✔")}";
    width: ${(props) => (props.type === "radio" ? "4px" : "auto")};
    height: ${(props) => (props.type === "radio" ? "4px" : "auto")};
    border-radius: 50%;
    background: ${(props) => (props.type === "radio" ? "#28507c" : "none")};
    color: #26368e;
    font: 7px/6px "DejaVu Sans", sans-serif;
  }
`;

const Option = ({ label, gap, ...rest }) => (
  <Field $gap={gap}>
    <Check type="checkbox" {...rest} />
    {label}
  </Field>
);

/* ---------- dialog ---------- */

const Dialog = styled.div`
  position: absolute;
  left: 426px;
  top: 180px;
  display: flex;
  flex-direction: column;
  width: 290px;
  height: 229px;
  padding: 0 5px 5px;
  border: 1px solid #2c3a58;
  border-radius: 4px;
  background: linear-gradient(#88a8d8, #9cbce8 20px, #7f9fd0 70px, #4c6ea8);
  box-shadow: 0 1px 5px 1px rgba(0, 0, 0, 0.7);
`;

const DialogTitle = styled.header`
  display: flex;
  flex: none;
  justify-content: space-between;
  height: 18px;
  line-height: 16px;
`;

const CloseButton = styled.button`
  width: 28px;
  height: 11px;
  padding: 0;
  border: 1px solid #5a2020;
  border-top: 0;
  border-radius: 0 0 3px 3px;
  background: linear-gradient(#e0a090, #c84030 50%, #b02818);
  color: #fff;
  font-size: 8px;
  font-weight: bold;
  line-height: 8px;
`;

const Summary = styled.section`
  flex: none;
  height: 64px;
  padding: 4px 8px;
  background: #fff;
  line-height: 11px;
  white-space: nowrap;
  h2 {
    margin: 0 0 1px 10px;
    font-size: 7px;
    line-height: 11px;
  }
  p {
    margin: 0;
    text-indent: 10px;
  }
`;

const DialogBody = styled.div`
  flex: 1;
  padding: 8px 6px 0;
  background: #f0f0f0;
`;

const OptionGroup = styled.fieldset`
  height: 98px;
  margin: 0;
  padding: 1px 0 0 10px;
  border: 1px solid #dcdfe4;
  legend {
    margin-left: -6px;
    padding: 0 1px;
  }
`;

const OptionRow = styled.div`
  display: grid;
  grid-template-columns: 83px ${(props) => (props.$buttons ? 81 : 95)}px 1fr;
  align-items: center;
  height: 22px;
`;

const DialogFoot = styled.footer`
  display: flex;
  align-items: center;
  gap: 3px;
  height: 34px;
  span {
    flex: 1;
    padding-bottom: 6px;
  }
`;

const ButtonPair = styled.div`
  display: flex;
  gap: 4px;
`;

const PushButton = styled.button`
  width: 44px;
  height: 13px;
  padding: 0;
  border: 1px solid ${(props) => (props.$primary ? "#2c9cc8" : "#808080")};
  border-radius: 2px;
  background: linear-gradient(#f6f6f6, #e6e6e6 50%, #d2d2d2);
  box-shadow: inset 0 0 0 1px ${(props) => (props.$primary ? "#8cdcf8" : "#f8f8f8")};
  line-height: 11px;
`;

const OPTIONS = [
  ["统改图层", "统改区域背景颜色", "统改花纹颜色"],
  ["统改花纹图案", "统改花纹宽度", "统改花纹高度"],
  ["统改花纹旋转角度", "统改花纹余切角度", "统改花纹插入点"],
  ["统改花纹行间距", "统改花纹列间距"],
];

const EditDialog = () => (
  <Dialog role="dialog" aria-label="统改区域参数">
    <DialogTitle>
      统改区域参数
      <CloseButton aria-label="close">×</CloseButton>
    </DialogTitle>
    <Summary>
      <h2>当前图元参数</h2>
      <p>
        所属图层&gt;&gt; 新空间图层：背景颜色&gt;&gt; A=52,R=255,G=0,B=255；花纹颜色&gt;&gt; 未
        <br />
        定义；花纹图例&gt;&gt; 无花纹：花纹宽度&gt;&gt; 10.0mm；花纹高度&gt;&gt; 10.0mm；花纹角度
        <br />
        &gt;&gt; 0.0度；花纹斜切&gt;&gt; 0.0度花纹行距&gt;&gt; 0.0mm；花纹列距&gt;&gt; 0.0mm
      </p>
    </Summary>
    <DialogBody>
      <OptionGroup>
        <legend>统改选项</legend>
        {OPTIONS.map((row) => (
          <OptionRow key={row[0]} $buttons={row.length === 2}>
            {row.map((label) => (
              <Option key={label} label={label} gap={1} defaultChecked />
            ))}
            {row.length === 2 && (
              <ButtonPair>
                <PushButton>全选</PushButton>
                <PushButton>清除</PushButton>
              </ButtonPair>
            )}
          </OptionRow>
        ))}
      </OptionGroup>
      <DialogFoot>
        <Svg $size={18} viewBox="0 0 18 18" aria-hidden="true">
          <path d="M9 1C4 1 1 4 1 8c0 3 3 6 6 6l4 4-1-4c4 0 7-3 7-6 0-4-3-7-8-7z" fill="#fff" stroke="#777" />
          <path d="M8 4h3v2H8zM7 7h4v5h1v1H7v-1h1V8H7z" fill="#1414b8" />
        </Svg>
        <span>对选择的区域按统改选项改为当前区域参数</span>
        <ButtonPair>
          <PushButton $primary>确定</PushButton>
          <PushButton>取消</PushButton>
        </ButtonPair>
      </DialogFoot>
    </DialogBody>
  </Dialog>
);

/* ---------- callouts ---------- */

const Overlay = styled.svg`
  position: absolute;
  left: 0;
  top: 0;
  width: 100%;
  height: 100%;
  pointer-events: none;
`;

const Note = styled.p`
  position: absolute;
  left: ${(props) => props.$x}px;
  top: ${(props) => props.$y}px;
  margin: 0;
  color: #000;
  font-size: 21px;
  font-weight: 500;
  line-height: 31px;
  white-space: nowrap;
  b {
    font-family: "Liberation Serif", serif;
    line-height: 0;
  }
  small {
    color: #667;
    font-family: "DejaVu Sans", sans-serif;
    font-size: 9px;
    line-height: 0;
  }
`;

const Callouts = () => (
  <>
    <Overlay aria-hidden="true">
      <rect x="311.500" y="265.500" width="126" height="93" fill="none" stroke="#d41420" />
      <g fill="#fff" stroke="#111">
        <path d="M721 62.500H813L913 42.500 857 62.500H873q14.500 0 14.500 14V127q0 14-14.500 14H721q-14-1-14-14V76.500q0-13 14-14z" />
        <path d="M117 249.500H217q22 1 22 22V314L315 351.500 239 341q-1 18-22 18.500H117q-21-1-22-20V271.500q1-21 22-22z" />
        <path d="M732 248.500H915q8 0 8 8V289q0 8-8 8H807L696 324.500 757 297H732q-8 0-8-8V256.500q0-8 8-8z" />
      </g>
      <path d="M5 587h3v3H5zM534 587h4v3h-4zM1059 296h8v5h-8zM1059 587h6v4h-6z" fill="#000" />
      <path d="M1059 1h5v6h-5z" fill="#b4b4b4" />
    </Overlay>
    <Note $x={728} $y={73}>
      <b>1</b>、点击“编辑
      <br />
      统改区域参数<b>”</b>
      <small>↵</small>
    </Note>
    <Note $x={114} $y={260}>
      <b>2</b>、点击两个
      <br />
      以上区域，
      <br />
      鼠标右击<small>↵</small>
    </Note>
    <Note $x={745} $y={259}>
      <b>3</b>、出现此对话框<small>↵</small>
    </Note>
  </>
);

const MENU = [
  "文件", "视图", "图形显示", "图形编辑", "捕捉", "线条", "区域", "图形文本",
  "点图形", "图块标注", "颜色及图像", "3D实体", "数据点", "坐标系统", "空间图形",
  "剖面图", "柱状图", "布局视口", "虚拟现实", "属性数据", "查询数据", "GIS报告", "帮助",
];

const App = () => (
  <>
    <GlobalStyle />
    <Page>
      <AppWindow>
        <MenuBar>
          {MENU.map((item) => (
            <MenuItem key={item}>{item}</MenuItem>
          ))}
        </MenuBar>
        <ToolRow $height={16}>
          <ToolGroup items="newDoc open save | cut copy paste undo redo | find print info help" />
          <ToolGroup items="snapA snapB snapC snapD snapE" />
          <ToolGroup items="waveA waveB waveC waveD waveE waveF waveG waveH" />
          <ToolGroup items="ptA ptB ptC ptD ptE ptF ptG ptH ptI" />
          <ToolGroup items="calA calB calC" />
          <Grip />
          <ToolSelect $width={111} aria-label="font" />
          <Divider />
          <ToolSelect $width={19} aria-label="size" />
          <LetterButton>B</LetterButton>
          <LetterButton $italic>I</LetterButton>
          <LetterButton $underline>U</LetterButton>
          <LetterButton>A</LetterButton>
          <Tools items="v | alignL alignC alignR | grid v | spacing v | listA listB indentA indentB picture fontA fontS globe" />
          <Overflow aria-label="more">▾</Overflow>
          <Grip />
          <Tools items="line poly slash cross target perp" />
        </ToolRow>
        <ToolRow $height={15}>
          <ToolGroup items="infoRing infoBox" />
          <ToolGroup items="hand lensMinus lensPlus lensRed lensGrid lensPair lensDark lensBlack lensArc lensDot lensGrid screen windows" />
          <ToolGroup items="pageSel brush plus move rotate scale shear dup dupB array trim nodeA nodeB redBox mirror" />
          <ToolGroup items="hook rect para circleR circle ellipse arc arcB" />
          <ToolGroup items="hill curve cutBox cutBox dashArc fillet filletB joint jointB blob" />
          <ToolGroup items="layers layersB layersC" />
          <ToolGroup items="ovA ovB ovC ovD ovE ovF ovG ovH marker" />
          <ToolGroup items="areaA areaB areaC areaD vennA vennB vennC vennD greenA greenB greenC" />
          <Grip />
          <Tools items="textA sheet" />
        </ToolRow>

        <Workspace>
          <SideBar $width={156}>
            <Panel $grow={266}>
              <PanelHead title="花纹图例" closable />
              <Tree>
                <Row $bold>
                  <Toggle>−</Toggle>
                  <Icon name="database" />
                  新数据库
                </Row>
                <Branch>
                  <Row $bold>
                    <Lead />
                    <Icon name="pattern" />
                    <Swatch $width={24} $height={13} $color="#fff" />
                    无花纹
                  </Row>
                  <FolderRow label="地表堆积物" />
                  <FolderRow label="松散沉积物" />
                  <FolderRow label="侵入岩" />
                </Branch>
              </Tree>
              <TabStrip>
                <PanelTab><Icon name="warn" />点图例</PanelTab>
                <PanelTab><Icon name="bars" />线图例</PanelTab>
                <PanelTab $active aria-label="花纹图例"><Icon name="palette" /></PanelTab>
              </TabStrip>
            </Panel>
            <Panel $grow={237}>
              <PanelHead title="颜色图例" tall />
              <Tree>
                <Row $bold>
                  <Toggle>−</Toggle>
                  <Icon name="database" />
                  新数据库
                </Row>
                <Branch>
                  <Row>
                    <Lead />
                    <Icon name="books" />
                    <Swatch $width={14} $height={9} $color="#f8c4f8" />
                    自定义...
                  </Row>
                  <Row>
                    <Lead />
                    <Icon name="books" />
                    <Swatch $width={14} $height={9} $color="#fff" />
                    透明
                  </Row>
                  <FolderRow label="通用" bold />
                  <FolderRow label="第四系" />
                  <FolderRow label="侵入体" />
                </Branch>
              </Tree>
              <TabStrip>
                <PanelTab><Icon name="warn" />标注样式</PanelTab>
                <PanelTab><Icon name="slant" />字体图例</PanelTab>
                <PanelTab $active><Icon name="dots" />颜色图例</PanelTab>
              </TabStrip>
            </Panel>
          </SideBar>

          <Center>
            <MapView />
            <DocTabs>
              <DocTab><Icon name="doc" />YTLWorld起始页<b>×</b></DocTab>
              <DocTab $active><Icon name="globeC" />空间图形编辑<b>×</b></DocTab>
              <DocNav>◂ ◂ ▸ ▸</DocNav>
            </DocTabs>
          </Center>

          <SideBar $width={62} $right>
            <Panel $grow={134}>
              <PanelHead title="布局" />
              <Tree>
                <LayerRoot />
                <Branch>
                  <LayerRow icon="stack" active />
                  <LayerRow icon="stack" />
                </Branch>
              </Tree>
              <ScrollTrack />
              <TabStrip>
                <PanelTab><Icon name="globeC" />空间图形</PanelTab>
                <PanelTab $active><Icon name="query" />布局</PanelTab>
              </TabStrip>
            </Panel>
            <Panel $grow={235}>
              <PanelHead title="柱状图" tall />
              <Tree>
                <LayerRoot />
                <Branch>
                  <LayerRow icon="chartDoc" active />
                </Branch>
              </Tree>
              <ScrollTrack />
              <TabStrip>
                <PanelTab $active><Icon name="columns" />柱状图</PanelTab>
                <PanelTab><Icon name="section" />剖面图</PanelTab>
              </TabStrip>
            </Panel>
            <Panel $grow={135}>
              <PanelHead title="查询表" tall />
              <Tree>
                <Branch $indent={28}>
                  {[0, 1, 2, 3, 4, 5].map((n) => (
                    <Row key={n}>
                      <Lead />
                      <Icon name="eye" />
                      <Icon name="cells" size={12} />
                    </Row>
                  ))}
                </Branch>
              </Tree>
              <ScrollTrack />
              <TabStrip>
                <PanelTab><Icon name="propsTab" />属性表</PanelTab>
                <PanelTab $active><Icon name="query" />查询表</PanelTab>
              </TabStrip>
            </Panel>
          </SideBar>
        </Workspace>

        <ParamBar>
          <strong>编辑区域参数：</strong>
          图层&gt;&gt; <Link href="#layer">新空间图层</Link>
          <Rule />
          花纹&gt;&gt; <Link href="#pattern">无花纹</Link>
          <Field>宽(mm)<NumberInput defaultValue="10.00" /></Field>
          <Option label="图例宽" defaultChecked />
          <Field>高(mm)<NumberInput defaultValue="10.00" /></Field>
          <Option label="图例高" defaultChecked />
          <Field>旋转(度)<NumberInput defaultValue="0.00" /></Field>
          <Field>斜切(度)<NumberInput defaultValue="0.00" /></Field>
          <Rule $wide />
          <Cluster>
            <Option label="花纹颜" type="radio" name="paint" />
            <Option label="填充色" type="radio" name="paint" defaultChecked />
            <Swatch $width={12} $height={9} $color="#f8c4f8" />
            <Link href="#color">自定义...</Link>
            <Rule />
            花纹间距(mm)&gt;&gt;
            <Field>行<NumberInput defaultValue="0" /></Field>
            <Field>列<NumberInput defaultValue="0" /></Field>
            <Rule />
            <Option label="编辑单个区域" />
          </Cluster>
        </ParamBar>
        <ParamBar $plain>
          <strong>操作提示：</strong>
          鼠标操作&gt;&gt;
          <Option label="增加选择" type="radio" name="mode" defaultChecked />
          <Option label="剔除选择" type="radio" name="mode" />
          <Rule />
          <Link href="#filter">条件选择</Link>
          <Rule />
          可以执行条件选择、用鼠标分别点取或开窗口选择一组区域,右击图形统改其参数！
        </ParamBar>
      </AppWindow>
      <EditDialog />
      <Callouts />
    </Page>
  </>
);

export default App;
